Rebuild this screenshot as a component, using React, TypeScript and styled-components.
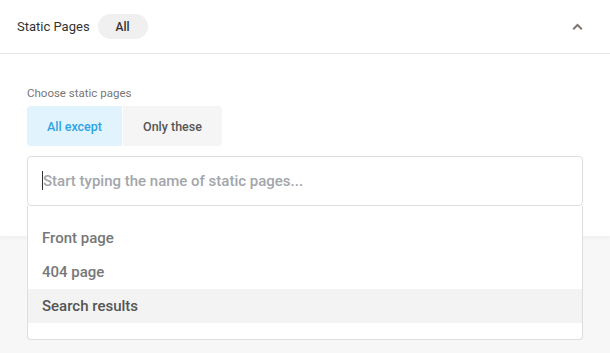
import styled, { createGlobalStyle } from "styled-components";

const GlobalStyle = createGlobalStyle`
  * { box-sizing: border-box; }
  body {
    margin: 0;
    background: #f7f7f7;
    font-family: Roboto, "Liberation Sans", sans-serif;
  }
`;

const Page = styled.div`
  min-height: 100vh;
  background: #f7f7f7;
`;

const Panel = styled.div`
  position: relative;
  z-index: 1;
  background: #fff;
  box-shadow: 0 2px 4px rgba(0, 0, 0, 0.04);
`;

const Header = styled.div`
  height: 54px;
  display: flex;
  align-items: center;
  padding: 0 27px 0 17px;
  border-bottom: 1px solid #e6e6e6;
`;

const Title = styled.span`
  font-size: 13px;
  color: #333;
  margin-right: 8px;
`;

const Pill = styled.span`
  display: inline-flex;
  align-items: center;
  justify-content: center;
  width: 50px;
  height: 25px;
  border-radius: 13px;
  background: #f0f0f0;
  font-size: 12px;
  font-weight: 500;
  color: #333;
`;

const Chevron = styled.svg`
  margin-left: auto;
  width: 11px;
  height: 8px;
`;

const Body = styled.div`
  padding: 32px 27px 30px;
`;

const Label = styled.div`
  font-size: 11.5px;
  line-height: 14px;
  color: #777;
  margin-bottom: 6px;
`;

const Toggle = styled.div`
  display: inline-flex;
  gap: 1px;
  border-radius: 4px;
  overflow: hidden;
  margin-bottom: 10px;
`;

const ToggleButton = styled.button<{ $active?: boolean }>`
  height: 40px;
  border: none;
  padding: 0;
  font-family: inherit;
  font-size: 12.5px;
  font-weight: 500;
  background: ${(p) => (p.$active ? "#e1f3fd" : "#f5f5f5")};
  color: ${(p) => (p.$active ? "#2fa4e2" : "#555")};
  width: ${(p) => (p.$active ? "95px" : "99px")};
`;

const Field = styled.div`
  position: relative;
`;

const Input = styled.input`
  display: block;
  width: 100%;
  height: 50px;
  border: 1px solid #dedede;
  border-radius: 4px;
  padding: 0 15px;
  font-family: inherit;
  font-size: 15px;
  font-weight: 500;
  color: #333;
  outline: none;
  caret-color: #333;
  &::placeholder {
    color: #a3a6ab;
  }
`;

const Caret = styled.span`
  position: absolute;
  left: 15px;
  top: 15px;
  width: 1px;
  height: 19px;
  background: #333;
  pointer-events: none;
`;

const Dropdown = styled.ul`
  position: absolute;
  top: 100%;
  left: 0;
  right: 0;
  margin: 0;
  padding: 15px 0 16px;
  list-style: none;
  background: #fff;
  border: 1px solid #dedede;
  border-top: none;
  border-radius: 0 0 4px 4px;
`;

const Option = styled.li<{ $hover?: boolean }>`
  height: 34px;
  display: flex;
  align-items: center;
  padding: 0 14px;
  font-size: 15px;
  font-weight: 500;
  color: ${(p) => (p.$hover ? "#555" : "#777")};
  background: ${(p) => (p.$hover ? "#f3f3f3" : "transparent")};
`;

const options = ["Front page", "404 page", "Search results"];

export default function App() {
  return (
    <Page>
      <GlobalStyle />
      <Panel>
        <Header>
          <Title>Static Pages</Title>
          <Pill>All</Pill>
          <Chevron viewBox="0 0 11 8">
            <path d="M1.2 6.2 L5.5 2 L9.8 6.2" fill="none" stroke="#7d7770" strokeWidth="2" />
          </Chevron>
        </Header>
        <Body>
          <Label>Choose static pages</Label>
          <Toggle>
            <ToggleButton $active>All except</ToggleButton>
            <ToggleButton>Only these</ToggleButton>
          </Toggle>
          <Field>
            <Input placeholder="Start typing the name of static pages..." />
            <Caret />
            <Dropdown>
              {options.map((o, i) => (
                <Option key={o} $hover={i === 2}>
                  {o}
                </Option>
              ))}
            </Dropdown>
          </Field>
        </Body>
      </Panel>
    </Page>
  );
}
